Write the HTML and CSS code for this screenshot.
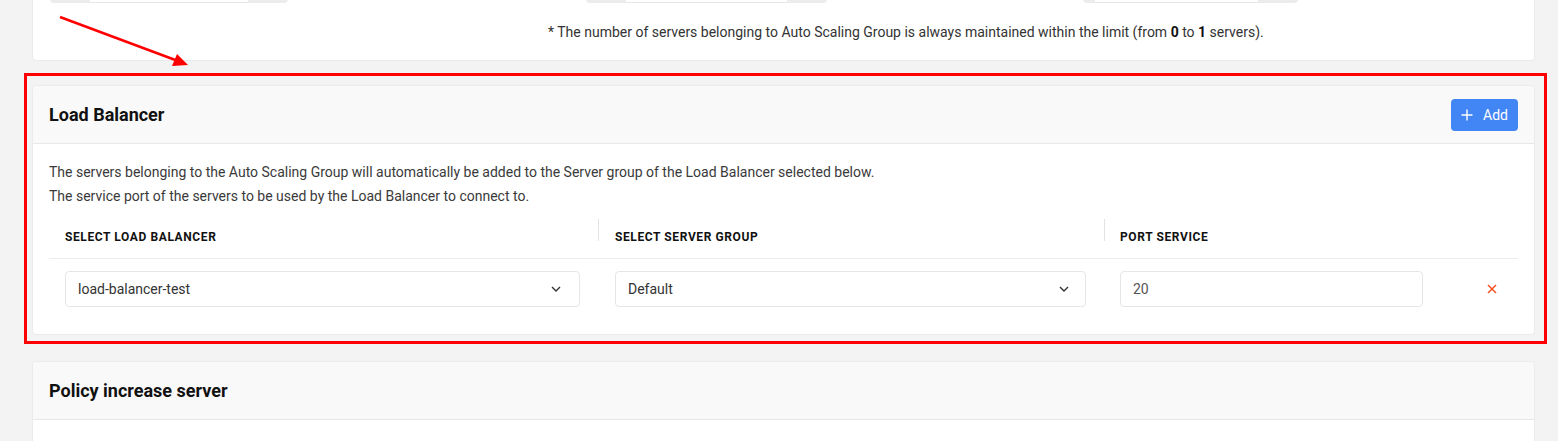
FILE: index.html
```html
<!DOCTYPE html>
<html>
<head>
<meta charset="utf-8">
<link rel="stylesheet" href="styles.css">
</head>
<body>
<main class="page">
    <section class="card card-limits">
        <div class="limits">
            <div class="stepper stepper-min"><span class="step"></span><span class="step-val"></span><span class="step"></span></div>
            <div class="stepper stepper-max"><span class="step"></span><span class="step-val"></span><span class="step"></span></div>
            <div class="stepper stepper-want"><span class="step"></span><span class="step-val"></span><span class="step"></span></div>
        </div>
        <p class="limit-note">* The number of servers belonging to Auto Scaling Group is always maintained within the limit (from <b>0</b> to <b>1</b> servers).</p>
    </section>

    <section class="card card-lb">
        <header class="card-head">
            <h2>Load Balancer</h2>
            <button class="btn-add">
                <svg width="12" height="12" viewBox="0 0 12 12"><path d="M6 0.5v11M0.5 6h11" stroke="#fff" stroke-width="1.4" fill="none"/></svg>
                Add
            </button>
        </header>
        <div class="card-body">
            <p class="desc">The servers belonging to the Auto Scaling Group will automatically be added to the Server group of the Load Balancer selected below.<br>
            The service port of the servers to be used by the Load Balancer to connect to.</p>

            <div class="lb-table">
                <div class="lb-row lb-head">
                    <div class="cell">Select load balancer</div>
                    <div class="cell sep">Select server group</div>
                    <div class="cell sep">Port service</div>
                    <div class="cell"></div>
                </div>
                <div class="lb-row">
                    <div class="cell">
                        <div class="select">
                            <span>load-balancer-test</span>
                            <svg width="10" height="6" viewBox="0 0 10 6"><path d="M1 1l4 4 4-4" stroke="#333" stroke-width="1.4" fill="none"/></svg>
                        </div>
                    </div>
                    <div class="cell">
                        <div class="select">
                            <span>Default</span>
                            <svg width="10" height="6" viewBox="0 0 10 6"><path d="M1 1l4 4 4-4" stroke="#333" stroke-width="1.4" fill="none"/></svg>
                        </div>
                    </div>
                    <div class="cell">
                        <div class="text-input">20</div>
                    </div>
                    <div class="cell cell-del">
                        <svg width="10" height="10" viewBox="0 0 10 10"><path d="M1 1l8 8M9 1l-8 8" stroke="#f4511e" stroke-width="1.5" fill="none"/></svg>
                    </div>
                </div>
            </div>
        </div>
    </section>

    <section class="card">
        <header class="card-head">
            <h2>Policy increase server</h2>
        </header>
        <div class="card-body">
            <p class="desc">The policy is a set of rules for increasing the number of servers in the Auto Scaling Group according to <a href="#">the policies</a>.</p>
        </div>
    </section>
</main>

<!-- screenshot annotation -->
<div class="annot-box"></div>
<svg class="annot-arrow" width="200" height="80" viewBox="0 0 200 80">
    <path d="M60 17L178 61" stroke="#f00" stroke-width="2.5" fill="none"/>
    <path d="M188 65L172 66L177 54Z" fill="#f00"/>
</svg>
</body>
</html>
```

FILE: styles.css
```css
html, body {
    margin: 0;
    background: #f3f3f3;
    font-family: Roboto, "Liberation Sans", sans-serif;
    color: #333;
    font-size: 14px;
}

.page {
    margin-top: -50px;
    padding: 0 23px 0 32px;
}

.card {
    background: #fff;
    border: 1px solid #ebebeb;
    border-radius: 4px;
    margin-bottom: 25px;
}

.card-lb {
    margin-bottom: 26px;
}

/* top card, scrolled mostly out of view */
.card-limits {
    padding: 16px 16px 16px;
    margin-bottom: 24px;
}

.limits {
    display: flex;
    height: 36px;
}

.stepper {
    display: flex;
    height: 36px;
    border-radius: 4px;
    overflow: hidden;
    background: #ececec;
}

.stepper-min { margin-left: 1px; }
.stepper-max { margin-left: 298px; }
.stepper-want { margin-left: 256px; }

.step {
    width: 40px;
}

.step-val {
    width: 158px;
    background: #fff;
    border-bottom: 1px solid #e6e6e6;
}

.stepper-max .step-val { width: 161px; }
.stepper-want .step:first-child { width: 12px; }
.stepper-want .step-val { width: 163px; }

.limit-note {
    margin: 17px 0 0;
    padding-left: 499px;
    line-height: 24px;
    color: #333;
}

.limit-note b {
    color: #111;
}

.card-head {
    display: flex;
    align-items: center;
    justify-content: space-between;
    height: 57px;
    padding: 0 16px;
    background: #f9f9f9;
    border-bottom: 1px solid #e8e8e8;
    border-radius: 4px 4px 0 0;
}

.card-head h2 {
    margin: 0;
    font-size: 18px;
    font-weight: 700;
    color: #111;
}

.btn-add {
    display: flex;
    align-items: center;
    gap: 10px;
    height: 32px;
    padding: 0 10px 0 10px;
    border: 0;
    border-radius: 4px;
    background: #4285f4;
    color: #fff;
    font-family: inherit;
    font-size: 14px;
}

.card-body {
    padding: 16px 16px 15px;
}

.desc {
    margin: 0;
    line-height: 24px;
    color: #3a3a3a;
}

.desc a {
    color: #3b82f6;
    text-decoration: none;
}

.lb-table {
    margin-top: 7px;
}

.lb-row {
    display: grid;
    grid-template-columns: 549px 506px 334px 1fr;
    align-items: center;
}

.lb-head {
    height: 43px;
    border-bottom: 1px solid #ececec;
}

.lb-head .cell {
    position: relative;
    font-size: 12px;
    font-weight: 700;
    text-transform: uppercase;
    color: #111;
    letter-spacing: 0.6px;
}

.lb-head .sep::before {
    content: "";
    position: absolute;
    left: 0;
    top: -11px;
    height: 22px;
    width: 1px;
    background: #e3e3e3;
}

.cell {
    padding: 0 18px 0 16px;
}

.lb-row:not(.lb-head) .cell {
    padding-top: 12px;
    padding-bottom: 12px;
}

.select, .text-input {
    display: flex;
    align-items: center;
    justify-content: space-between;
    height: 34px;
    padding: 0 18px 0 12px;
    border: 1px solid #e6e6e6;
    border-radius: 4px;
    color: #333;
}

.lb-row .cell:nth-child(2) {
    padding-left: 17px;
}

.lb-row .cell:nth-child(2) .select {
    padding-right: 16px;
}

.lb-row .cell:nth-child(3) {
    padding-right: 15px;
}

.text-input {
    color: #555;
}

.cell-del {
    display: flex;
    justify-content: flex-end;
    padding-right: 21px;
}

/* screenshot annotation overlays */
.annot-box {
    position: absolute;
    left: 24px;
    top: 73px;
    width: 1517px;
    height: 265px;
    border: 3px solid #f00;
}

.annot-arrow {
    position: absolute;
    left: 0;
    top: 0;
}
```
